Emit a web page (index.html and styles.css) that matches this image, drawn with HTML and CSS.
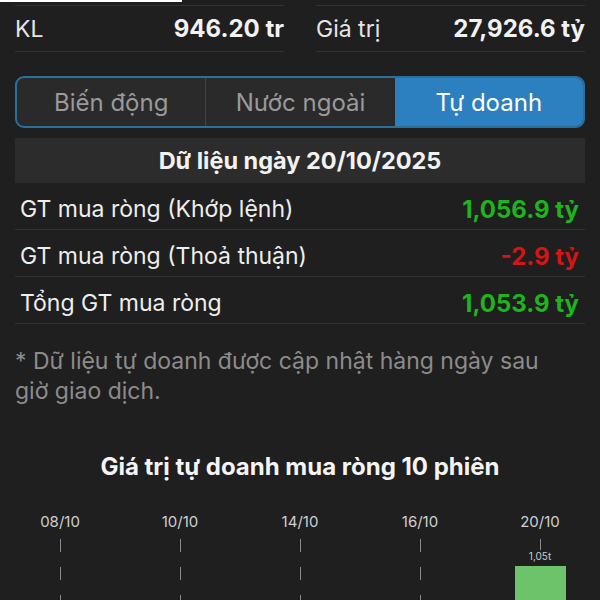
FILE: index.html
```html
<!DOCTYPE html>
<html lang="vi">
<head>
    <meta charset="UTF-8">
    <meta name="viewport" content="width=device-width, initial-scale=1.0">
    <title>Tự doanh</title>
    <link rel="stylesheet" href="styles.css">
</head>
<body>
    <!-- top edge of the previous tab -->
    <div class="topline"></div>

    <!-- KL / Gia tri -->
    <div class="stats">
        <div class="stat">
            <span class="stat-label">KL</span>
            <span class="stat-value">946.20 tr</span>
        </div>
        <div class="stat">
            <span class="stat-label">Giá trị</span>
            <span class="stat-value">27,926.6 tỷ</span>
        </div>
    </div>

    <!-- Tabs -->
    <div class="segment">
        <div class="seg-item">Biến động</div>
        <div class="seg-item">Nước ngoài</div>
        <div class="seg-item active">Tự doanh</div>
    </div>

    <!-- Data table -->
    <div class="table">
        <div class="table-head">Dữ liệu ngày 20/10/2025</div>
        <div class="row">
            <span>GT mua ròng (Khớp lệnh)</span>
            <span class="val up">1,056.9 tỷ</span>
        </div>
        <div class="row">
            <span>GT mua ròng (Thoả thuận)</span>
            <span class="val down">-2.9 tỷ</span>
        </div>
        <div class="row">
            <span>Tổng GT mua ròng</span>
            <span class="val up">1,053.9 tỷ</span>
        </div>
    </div>

    <p class="note">* Dữ liệu tự doanh được cập nhật hàng ngày sau giờ giao dịch.</p>

    <!-- Chart -->
    <div class="chart">
        <h2 class="chart-title">Giá trị tự doanh mua ròng 10 phiên</h2>
        <div class="chart-cols">
            <div class="col">
                <div class="col-label">08/10</div>
                <div class="col-line"></div>
            </div>
            <div class="col">
                <div class="col-label">10/10</div>
                <div class="col-line"></div>
            </div>
            <div class="col">
                <div class="col-label">14/10</div>
                <div class="col-line"></div>
            </div>
            <div class="col">
                <div class="col-label">16/10</div>
                <div class="col-line"></div>
            </div>
            <div class="col">
                <div class="col-label">20/10</div>
                <div class="col-line"></div>
                <div class="bar-value">1,05t</div>
                <div class="bar" style="height: 60px"></div>
            </div>
        </div>
    </div>
</body>
</html>
```

FILE: styles.css
```css
body {
    font-family: 'Inter', 'Noto Sans', sans-serif;
    margin: 0;
    padding: 0;
    background-color: #1f1f1f;
    color: #eee;
    height: 600px;
    overflow: hidden;
}
.topline {
    width: 182px;
    height: 2px;
    background-color: #fff;
}
.stats {
    display: grid;
    grid-template-columns: 1fr 1fr;
    column-gap: 32px;
    padding: 0 15px;
    margin-top: 3px;
}
.stat {
    display: flex;
    justify-content: space-between;
    align-items: center;
    height: 45px;
    border-top: 1px solid #333;
    border-bottom: 1px solid #333;
}
.stat-label {
    font-size: 23px;
    color: #e6e6e6;
}
.stat-value {
    font-size: 24px;
    font-weight: 700;
    color: #f2f2f2;
}
.segment {
    display: flex;
    margin: 24px 15px 0;
    height: 48px;
    border: 2px solid #2b6f9c;
    border-radius: 9px;
    overflow: hidden;
    background-color: #2a2a2a;
}
.seg-item {
    flex: 1;
    display: flex;
    align-items: center;
    justify-content: center;
    font-size: 24px;
    color: #9a9a9a;
    border-left: 1px solid #444;
}
.seg-item:first-child {
    border-left: none;
}
.seg-item.active {
    background-color: #2c80c0;
    color: #fff;
    border-left: none;
}
.table {
    margin: 10px 15px 0;
}
.table-head {
    background-color: #2c2c2c;
    height: 45px;
    display: flex;
    align-items: center;
    justify-content: center;
    font-size: 23.5px;
    font-weight: 700;
    color: #f2f2f2;
}
.row {
    display: flex;
    justify-content: space-between;
    align-items: center;
    height: 47px;
    padding: 6px 6px 0 5px;
    box-sizing: border-box;
    border-bottom: 1px solid #333;
    font-size: 23px;
    color: #eee;
}
.val {
    font-weight: 700;
    font-size: 24px;
}
.up {
    color: #1db41d;
}
.down {
    color: #d41515;
}
.note {
    margin: 22px 15px 0;
    padding-right: 30px;
    font-size: 23px;
    line-height: 30px;
    color: #8c8c8c;
}
.chart {
    margin-top: 46px;
}
.chart-title {
    margin: 0;
    text-align: center;
    font-size: 24px;
    font-weight: 700;
    color: #f4f4f4;
}
.chart-cols {
    display: grid;
    grid-template-columns: repeat(5, 1fr);
    margin-top: 31px;
}
.col {
    display: flex;
    flex-direction: column;
    align-items: center;
    position: relative;
    height: 100px;
}
.col-label {
    font-size: 15px;
    color: #d0d0d0;
}
.col-line {
    width: 1px;
    height: 80px;
    margin-top: 8px;
    background-image: linear-gradient(#8a8a8a 13px, transparent 13px);
    background-size: 1px 28px;
}
.bar-value {
    position: absolute;
    top: 38px;
    font-size: 10px;
    color: #ccc;
    background-color: #1f1f1f;
    padding: 0 2px;
}
.bar {
    position: absolute;
    top: 54px;
    width: 51px;
    background-color: #6cc36a;
}
```
